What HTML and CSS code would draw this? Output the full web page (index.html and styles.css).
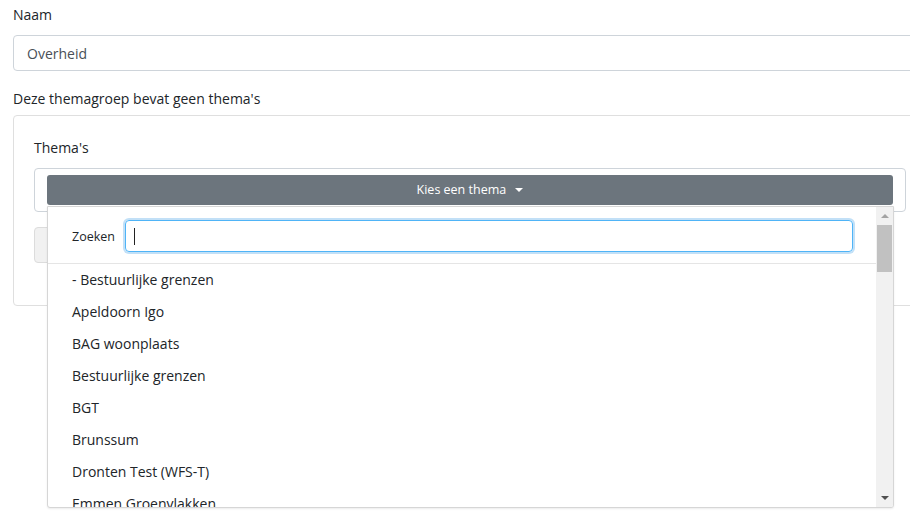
FILE: index.html
```html
<!DOCTYPE html>
<html lang="nl">
<head>
<meta charset="utf-8">
<link rel="stylesheet" href="styles.css">
</head>
<body>
<div class="page">
  <div class="field">
    <label class="label">Naam</label>
    <div class="input">Overheid</div>
  </div>
  <p class="info">Deze themagroep bevat geen thema's</p>
  <div class="card">
    <label class="label">Thema's</label>
    <div class="select-wrap">
      <div class="select-btn">Kies een thema <span class="caret"></span></div>
      <div class="dropdown">
        <div class="dd-content">
          <div class="search">
            <span class="search-label">Zoeken</span>
            <div class="search-input"><span class="cursor"></span></div>
          </div>
          <ul class="items">
            <li>- Bestuurlijke grenzen</li>
            <li>Apeldoorn Igo</li>
            <li>BAG woonplaats</li>
            <li>Bestuurlijke grenzen</li>
            <li>BGT</li>
            <li>Brunssum</li>
            <li>Dronten Test (WFS-T)</li>
            <li>Emmen Groenvlakken</li>
          </ul>
        </div>
        <div class="scrollbar">
          <span class="arrow up"></span>
          <span class="thumb"></span>
          <span class="track"></span>
          <span class="arrow down"></span>
        </div>
      </div>
    </div>
    <div class="add-btn"></div>
  </div>
</div>
</body>
</html>
```
FILE: styles.css
```css
html, body {
  margin: 0;
  padding: 0;
  overflow: hidden;
  background: #fff;
}
body {
  font-family: "Open Sans", "Noto Sans", sans-serif;
  font-size: 14px;
  line-height: 21px;
  color: #212529;
  width: 910px;
  height: 515px;
}
.page {
  margin-left: 13px;
  width: 914px;
  padding-top: 4px;
}
.label {
  display: block;
  margin-bottom: 10px;
}
.input {
  border: 1px solid #ced4da;
  border-radius: 4px;
  padding: 2px 13px 0;
  height: 32px;
  line-height: 32px;
  color: #495057;
}
.info {
  margin: 17px 0 6px;
}
.card {
  border: 1px solid #dfdfdf;
  border-radius: 4px;
  padding: 21px 20px 40px;
  height: 128px;
}
.select-wrap {
  position: relative;
  border: 1px solid #ced4da;
  border-radius: 4px;
  padding: 6px 12px;
}
.select-btn {
  height: 30px;
  background: #6c757d;
  border-radius: 3px;
  color: #fff;
  font-size: 12.5px;
  line-height: 30px;
  text-align: center;
}
.caret {
  display: inline-block;
  width: 0;
  height: 0;
  margin-left: 6px;
  vertical-align: 2px;
  border-top: 4px solid #fff;
  border-left: 4px solid transparent;
  border-right: 4px solid transparent;
}
.dropdown {
  position: absolute;
  left: 12px;
  top: 37px;
  width: 845px;
  height: 300px;
  background: #fff;
  border: 1px solid #d6d6d6;
  border-radius: 0 0 3px 3px;
  box-shadow: 0 1px 2px rgba(0,0,0,.08);
  display: flex;
  overflow: hidden;
  z-index: 5;
}
.dd-content {
  flex: 1;
  overflow: hidden;
}
.search {
  display: flex;
  align-items: center;
  gap: 10px;
  padding: 13px 23px 11px 24px;
  border-bottom: 1px solid #e5e5e5;
}
.search-label {
  font-size: 12.5px;
}
.search-input {
  flex: 1;
  height: 30px;
  border: 1px solid #4fb4f7;
  border-radius: 4px;
  box-shadow: 0 0 0 2px #c2e0f7;
  display: flex;
  align-items: center;
  padding-left: 8px;
}
.cursor {
  width: 1px;
  height: 17px;
  background: #222;
}
.items {
  list-style: none;
  margin: 0;
  padding: 0;
}
.items li {
  height: 32px;
  line-height: 32px;
  padding: 0 24px;
}
.scrollbar {
  width: 17px;
  background: #f1f1f1;
  display: flex;
  flex-direction: column;
  align-items: center;
}
.arrow {
  width: 0;
  height: 0;
  border-left: 4px solid transparent;
  border-right: 4px solid transparent;
}
.arrow.up {
  margin-top: 7px;
  border-bottom: 4px solid #a3a3a3;
}
.arrow.down {
  margin-bottom: 7px;
  border-top: 4px solid #505050;
}
.thumb {
  margin-top: 7px;
  width: 15px;
  height: 47px;
  background: #c1c1c1;
}
.track {
  flex: 1;
}
.add-btn {
  margin-top: 15px;
  width: 120px;
  height: 34px;
  border: 1px solid #dcdcdc;
  border-radius: 4px;
  background: #f1f1f1;
}
```
